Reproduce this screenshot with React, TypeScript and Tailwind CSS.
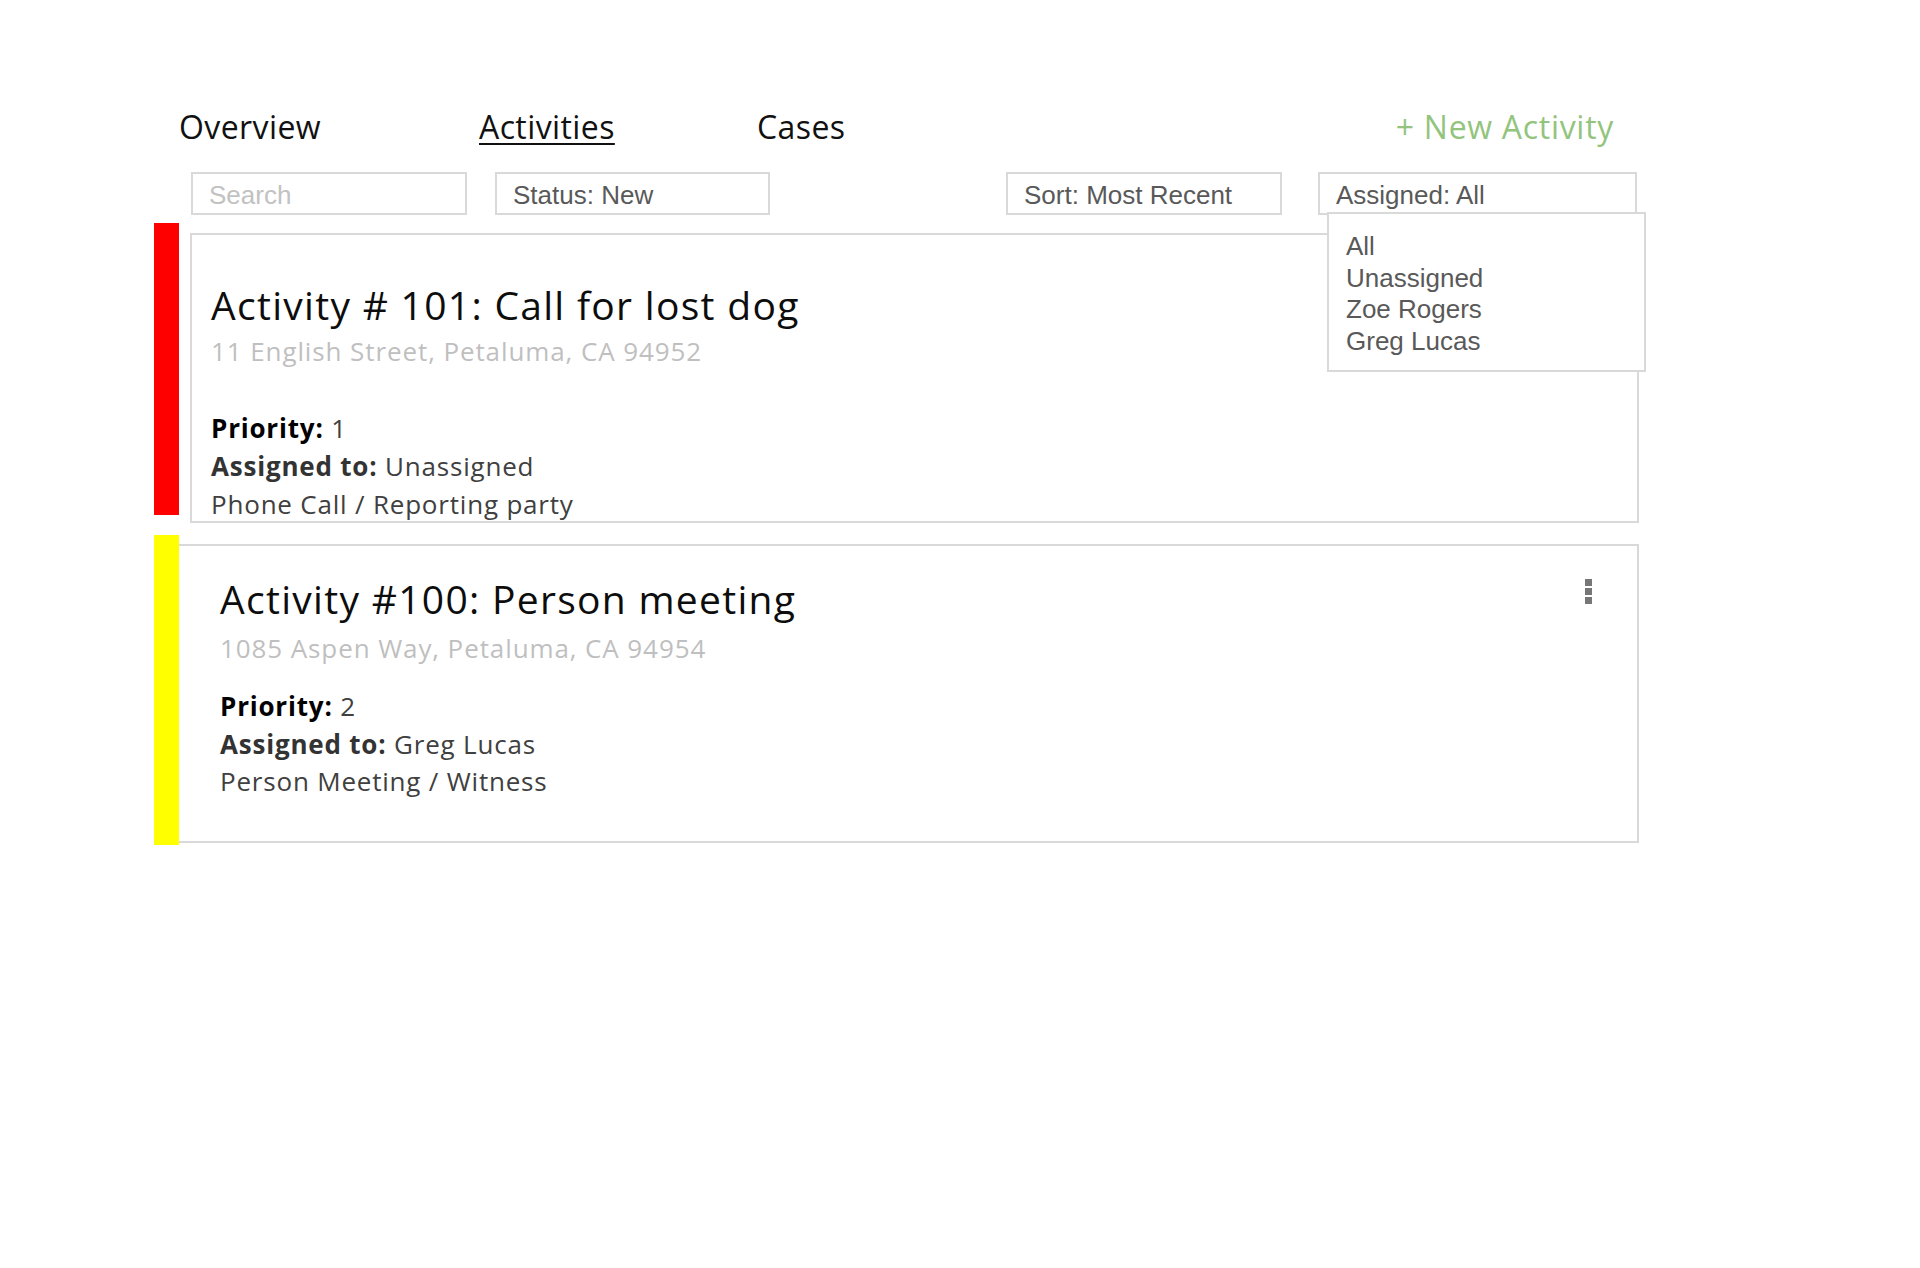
import React from "react";

const sans = { fontFamily: "'Open Sans', Lato, sans-serif" } as const;
const arial = { fontFamily: "'Liberation Sans', Arial, sans-serif" } as const;

function FilterBox({
  label,
  width,
  ml,
  muted,
  children,
}: {
  label: string;
  width: string;
  ml: string;
  muted?: boolean;
  children?: React.ReactNode;
}) {
  return (
    <div
      className={`relative h-[43px] border-2 border-[#d9d9d9] bg-white pl-[16px] pt-[6px] ${width} ${ml}`}
    >
      <div
        style={arial}
        className={`text-[26px] leading-[30px] whitespace-nowrap ${muted ? "text-[#c2c2c2]" : "text-[#595959]"}`}
      >
        {label}
      </div>
      {children}
    </div>
  );
}

export default function App() {
  return (
    <div className="w-full h-[1268px] bg-white overflow-hidden">
      <div className="ml-[154px] w-[1491px] pt-[109px]">
        {/* Nav */}
        <div style={sans} className="flex items-start text-[32px] leading-[36px] tracking-[0.4px] text-[#111]">
          <div className="ml-[25px] w-[300px]">Overview</div>
          <div className="w-[278px]">
            <span className="underline decoration-[2px] underline-offset-[4px]">Activities</span>
          </div>
          <div>Cases</div>
          <div className="ml-auto mr-[31px] tracking-[0.7px] text-[#93c47d]">+ New Activity</div>
        </div>

        {/* Filters */}
        <div className="mt-[27px] flex items-start relative z-10">
          <FilterBox label="Search" width="w-[276px]" ml="ml-[37px]" muted />
          <FilterBox label="Status: New" width="w-[275px]" ml="ml-[28px]" />
          <FilterBox label="Sort: Most Recent" width="w-[276px]" ml="ml-[236px]" />
          <FilterBox label="Assigned: All" width="w-[319px]" ml="ml-[36px]">
            <div className="absolute left-[7px] top-[38px] w-[319px] h-[160px] border-2 border-[#d9d9d9] bg-white pl-[17px] pt-[17px]">
              <ul style={arial} className="text-[26px] leading-[31.6px] text-[#595959]">
                <li>All</li>
                <li>Unassigned</li>
                <li>Zoe Rogers</li>
                <li>Greg Lucas</li>
              </ul>
            </div>
          </FilterBox>
        </div>

        {/* Card 1 */}
        <div className="mt-[8px] flex items-start">
          <div className="w-[25px] h-[292px] bg-[#ff0000] shrink-0" />
          <div
            style={sans}
            className="ml-[11px] mt-[10px] w-[1449px] h-[290px] border-2 border-[#d9d9d9] pl-[19px] pt-[47px]"
          >
            <div className="text-[39px] leading-[46px] tracking-[1.3px] text-[#0d0d0d]">
              Activity # 101: Call for lost dog
            </div>
            <div className="mt-[8px] text-[26px] leading-[30px] tracking-[0.9px] text-[#bfbfbf]">
              11 English Street, Petaluma, CA 94952
            </div>
            <div className="mt-[43px] text-[26px] leading-[38px] tracking-[0.8px] text-[#404040]">
              <div>
                <span className="font-bold text-black">Priority:</span> 1
              </div>
              <div>
                <span className="font-bold text-[#333]">Assigned to:</span> Unassigned
              </div>
              <div>Phone Call / Reporting party</div>
            </div>
          </div>
        </div>

        {/* Card 2 */}
        <div className="mt-[12px] flex items-start">
          <div className="w-[25px] h-[310px] bg-[#ffff00] shrink-0" />
          <div
            style={sans}
            className="relative mt-[9px] w-[1460px] h-[299px] border-y-2 border-r-2 border-[#d9d9d9] pl-[41px] pt-[30px]"
          >
            <div className="text-[39px] leading-[46px] tracking-[1.3px] text-[#0d0d0d]">
              Activity #100: Person meeting
            </div>
            <div className="mt-[11px] text-[26px] leading-[30px] tracking-[0.9px] text-[#bfbfbf]">
              1085 Aspen Way, Petaluma, CA 94954
            </div>
            <div className="mt-[25px] text-[26px] leading-[37.5px] tracking-[0.8px] text-[#404040]">
              <div>
                <span className="font-bold text-black">Priority:</span> 2
              </div>
              <div>
                <span className="font-bold text-[#333]">Assigned to:</span> Greg Lucas
              </div>
              <div>Person Meeting / Witness</div>
            </div>
            <div className="absolute right-[45px] top-[33px] flex flex-col gap-[2px]">
              <span className="block w-[7px] h-[7px] bg-[#777]" />
              <span className="block w-[7px] h-[7px] bg-[#777]" />
              <span className="block w-[7px] h-[7px] bg-[#777]" />
            </div>
          </div>
        </div>
      </div>
    </div>
  );
}
